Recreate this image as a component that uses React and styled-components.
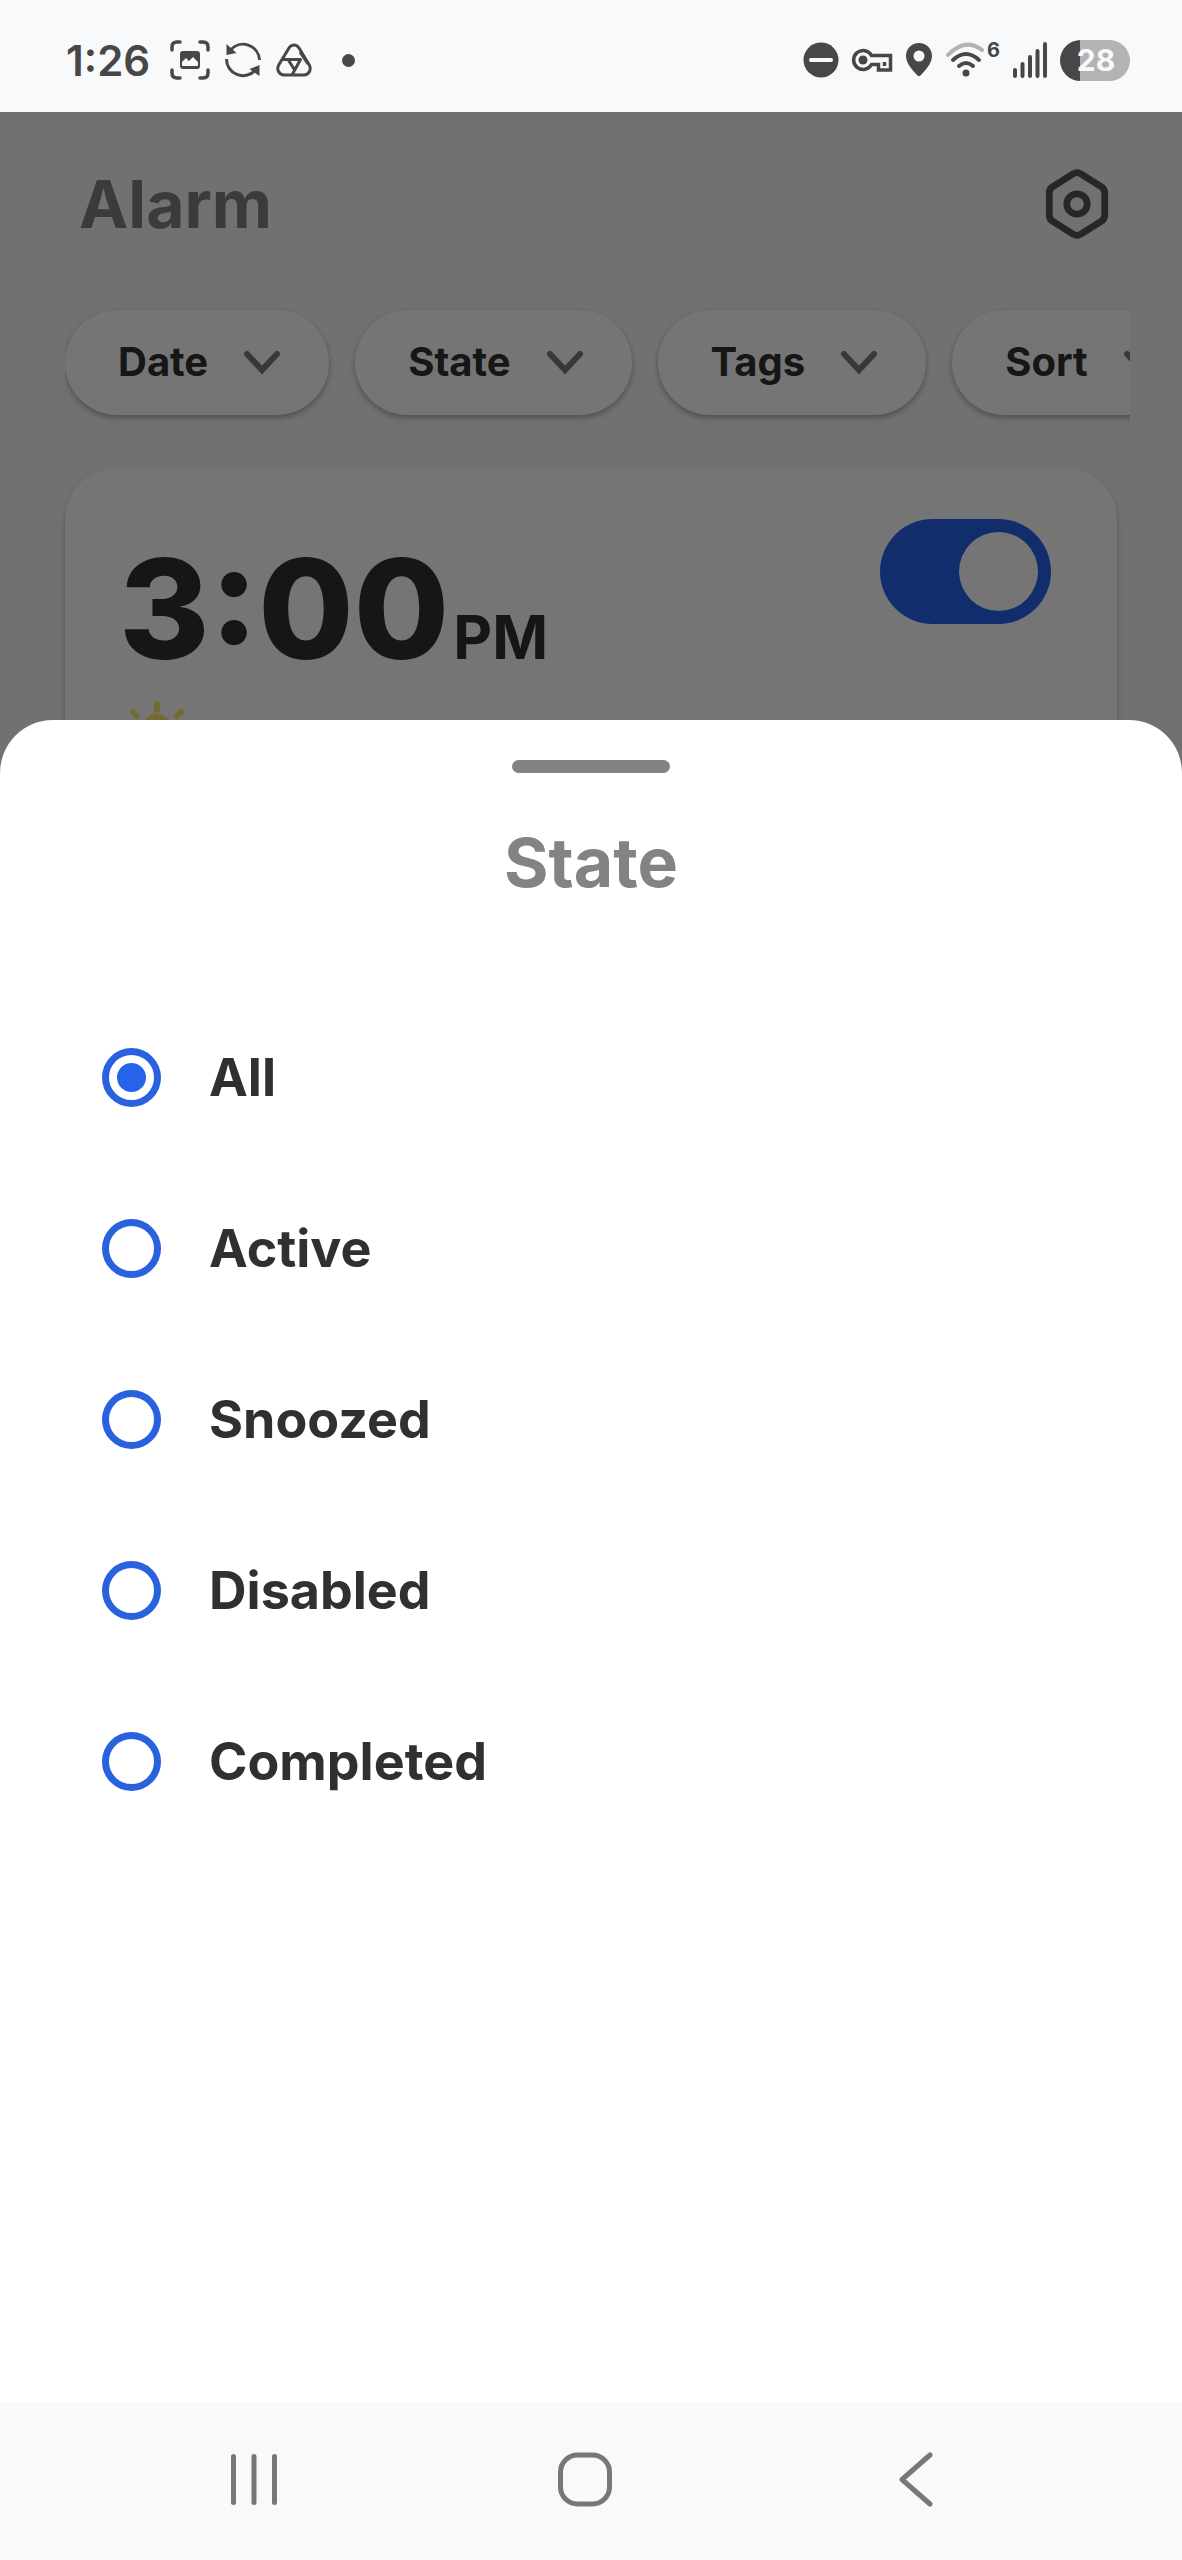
import React, { useState } from 'react';
import styled, { createGlobalStyle } from 'styled-components';

const filters = ['Date', 'State', 'Tags', 'Sort'];
const states = ['All', 'Active', 'Snoozed', 'Disabled', 'Completed'];

const StatusIcons = () => (
  <StatusGroup>
    <svg width="40" height="40" viewBox="0 0 40 40" fill="none" stroke="#474747" strokeWidth="3.500" strokeLinecap="round">
      <path d="M2 10V7q0-5 5-5h3M30 2h3q5 0 5 5v3M38 30v3q0 5-5 5h-3M10 38H7q-5 0-5-5v-3" />
      <rect x="10" y="11" width="20" height="18" rx="3" fill="#474747" stroke="none" />
      <path d="M12 25v-3l4-4 3 3 4-4 5 5v3q0 1-1 1H13q-1 0-1-1z" fill="#f8f9fb" stroke="none" />
    </svg>
    <svg width="38" height="38" viewBox="0 0 38 38" fill="none" stroke="#474747" strokeWidth="3">
      <path d="M7 8.500A16.500 16.500 0 0 1 35.500 19" />
      <path d="M31 29.500A16.500 16.500 0 0 1 2.500 18" />
      <path d="M2.500 3v11l10-2zM35.500 24v11l-10-7z" fill="#474747" stroke="none" />
    </svg>
    <svg width="36" height="34" viewBox="0 0 36 34" fill="none" stroke="#474747" strokeWidth="3" strokeLinejoin="round">
      <path d="M18 2q3 0 5 3l10 16.500c3 5 0 10-5 10.500H8c-5-.5-8-5.500-5-10.500L13 5q2-3 5-3z" />
      <path d="M7 16.500h17.500L16 32M12 16.500l7 11M24 9l8 12" />
    </svg>
    <Dot />
  </StatusGroup>
);

const SystemIcons = () => (
  <SystemGroup>
    <svg width="36" height="36" viewBox="0 0 36 36">
      <circle cx="18" cy="18" r="17.500" fill="#474747" />
      <path d="M8 18h20" stroke="#f8f9fb" strokeWidth="4" strokeLinecap="round" />
    </svg>
    <svg width="42" height="26" viewBox="0 0 42 26" fill="none" stroke="#474747" strokeWidth="3.500">
      <path d="M20.500 8.500H39.500V23H27.500V17.500H20.500A9.500 9.500 0 1 1 20.500 8.500z" />
      <path d="M33.500 15v4" />
      <circle cx="12" cy="13" r="4.500" fill="#474747" stroke="none" />
    </svg>
    <svg width="28" height="36" viewBox="0 0 28 36">
      <path
        d="M14 1C6.500 1 1 6.700 1 14c0 8 7.500 15 11.500 19.500q1.500 1.500 3 0C19.500 29 27 22 27 14 27 6.700 21.500 1 14 1zm0 18.500a5.500 5.500 0 1 1 0-11 5.500 5.500 0 0 1 0 11z"
        fill="#474747"
      />
    </svg>
    <WifiWrapper>
      <svg width="42" height="36" viewBox="0 0 42 36" fill="none" strokeWidth="4" strokeLinecap="round">
        <path d="M3 13Q20 -5 37 8" stroke="#b3b3b3" />
        <path d="M8 18Q21 6 34 18M14 24Q21 18 28 24" stroke="#474747" />
        <circle cx="21" cy="31" r="3.500" fill="#474747" />
      </svg>
      <sup>6</sup>
    </WifiWrapper>
    <svg width="36" height="38" viewBox="0 0 36 38" stroke="#474747" strokeWidth="4" strokeLinecap="round">
      <path d="M3 29v6M10.500 23v12M18 16v19M25.500 10v25M33 3v32" />
    </svg>
    <Battery>28</Battery>
  </SystemGroup>
);

const Chevron = () => (
  <svg width="38" height="26" viewBox="0 0 38 26" fill="none" stroke="#7b7b7b" strokeWidth="6">
    <path d="M4 5l15 16L34 5" strokeLinecap="round" />
  </svg>
);

const App = () => {
  const [selected, setSelected] = useState('All');
  const [enabled, setEnabled] = useState(true);

  return (
    <Phone>
      <GlobalStyle />
      <StatusBar>
        <Clock>1:26</Clock>
        <StatusIcons />
        <SystemIcons />
      </StatusBar>

      <Stage>
        <Page>
          <Header>
            <PageTitle>Alarm</PageTitle>
            <IconButton aria-label="Settings">
              <svg width="66" height="70" viewBox="0 0 66 72" fill="none" stroke="#555" strokeWidth="7">
                <path
                  d="M29 5q4-2.500 8 0L57 17.500q4.500 2.500 4.500 7v23q0 4.500-4.500 7L37 67q-4 2.500-8 0L9 54.500q-4.500-2.500-4.500-7v-23q0-4.500 4.500-7z"
                  strokeLinejoin="round"
                />
                <circle cx="33" cy="36" r="10.500" />
              </svg>
            </IconButton>
          </Header>

          <Filters>
            {filters.map((name) => (
              <Chip key={name}>
                {name}
                <Chevron />
              </Chip>
            ))}
          </Filters>

          <AlarmCard>
            <CardTop>
              <Time>
                3:00<Meridiem>PM</Meridiem>
              </Time>
              <Toggle
                type="checkbox"
                aria-label="Alarm enabled"
                checked={enabled}
                onChange={() => setEnabled(!enabled)}
              />
            </CardTop>
            <Sun width="76" height="64" viewBox="0 0 76 64" stroke="#fbe765" strokeWidth="6" strokeLinecap="round">
              <circle cx="38" cy="32" r="16" fill="#fbe765" stroke="none" />
              <path d="M38 6v6M38 52v6M10 32h6M60 32h6M14 14l4 4M58 18l4-4M14 50l4-4M58 46l4 4" />
            </Sun>
          </AlarmCard>
        </Page>

        <Scrim />

        <Sheet role="dialog" aria-labelledby="sheet-title">
          <Handle />
          <SheetTitle id="sheet-title">State</SheetTitle>
          <Options>
            {states.map((name) => (
              <Option key={name}>
                <Radio
                  type="radio"
                  name="state"
                  checked={selected === name}
                  onChange={() => setSelected(name)}
                />
                {name}
              </Option>
            ))}
          </Options>
        </Sheet>
      </Stage>

      <NavBar>
        <NavButton aria-label="Recents">
          <svg width="56" height="56" viewBox="0 0 56 56" stroke="#777" strokeWidth="5" strokeLinecap="round">
            <path d="M7.500 5.500v46M28 5.500v46M48.500 5.500v46" />
          </svg>
        </NavButton>
        <NavButton aria-label="Home">
          <svg width="56" height="56" viewBox="0 0 56 56" fill="none" stroke="#777" strokeWidth="5">
            <rect x="3.500" y="4" width="49" height="49" rx="17" />
          </svg>
        </NavButton>
        <NavButton aria-label="Back">
          <svg width="56" height="56" viewBox="0 0 56 56" fill="none" stroke="#777" strokeWidth="5">
            <path d="M42 4L14 28.500 42 53" strokeLinecap="round" strokeLinejoin="round" />
          </svg>
        </NavButton>
      </NavBar>
    </Phone>
  );
};

const GlobalStyle = createGlobalStyle`
  * {
    box-sizing: border-box;
  }

  body {
    margin: 0;
    background: #f8f9fb;
    font-family: Inter, Roboto, sans-serif;
  }

  button {
    border: none;
    font-family: inherit;
    cursor: pointer;
  }
`;

const Phone = styled.div`
  min-height: 100vh;
  display: flex;
  flex-direction: column;
`;

const StatusBar = styled.div`
  height: 112px;
  padding: 8px 52px 0 66px;
  display: flex;
  align-items: center;
  background: #f8f9fb;
`;

const Clock = styled.span`
  width: 84px;
  margin-right: 20px;
  font-size: 42px;
  font-weight: 600;
  color: #474747;
`;

const StatusGroup = styled.div`
  display: flex;
  align-items: center;
  gap: 14px;
`;

const Dot = styled.span`
  width: 13px;
  height: 13px;
  margin-left: 16px;
  border-radius: 50%;
  background: #474747;
`;

const SystemGroup = styled.div`
  margin-left: auto;
  display: flex;
  align-items: center;
  gap: 12px;
`;

const WifiWrapper = styled.div`
  display: flex;
  align-items: flex-start;

  sup {
    font-size: 20px;
    line-height: 16px;
    font-weight: 700;
    color: #474747;
  }
`;

const Battery = styled.span`
  width: 70px;
  height: 41px;
  padding-left: 2px;
  border-radius: 21px;
  background: linear-gradient(to right, #474747 28%, #b3b3b3 28%);
  font-size: 30px;
  line-height: 41px;
  font-weight: 700;
  text-align: center;
  color: #f8f9fb;
`;

const Stage = styled.main`
  flex: 1;
  display: grid;
  grid-template-columns: minmax(0, 1fr);

  > * {
    grid-area: 1 / 1;
  }
`;

const Page = styled.div`
  background: #f7f7f7;
  padding-left: 65px;
`;

const Header = styled.header`
  height: 182px;
  padding: 2px 72px 0 14px;
  display: flex;
  justify-content: space-between;
  align-items: center;
`;

const PageTitle = styled.h1`
  margin: 0;
  font-size: 66px;
  font-weight: 700;
  color: #808080;
`;

const IconButton = styled.button`
  padding: 0;
  background: none;
  display: flex;
`;

const Filters = styled.div`
  margin-right: 52px;
  padding: 16px 0 20px;
  display: flex;
  gap: 26px;
  overflow: hidden;
`;

const Chip = styled.button`
  height: 105px;
  padding: 0 48px 2px 53px;
  flex-shrink: 0;
  display: flex;
  align-items: center;
  gap: 35px;
  border-radius: 53px;
  background: #fff;
  box-shadow: 0 3px 6px rgba(0, 0, 0, 0.3);
  font-size: 40px;
  font-weight: 700;
  color: #303030;
`;

const AlarmCard = styled.section`
  margin: 32px 65px 0 0;
  padding: 52px 66px 52px 54px;
  border-radius: 53px;
  background: #fff;
  box-shadow: 0 3px 6px rgba(0, 0, 0, 0.2);
`;

const CardTop = styled.div`
  height: 179px;
  display: flex;
  justify-content: space-between;
  align-items: flex-start;
`;

const Time = styled.div`
  padding-top: 6px;
  font-size: 138px;
  line-height: 168px;
  font-weight: 800;
  color: #303030;
`;

const Meridiem = styled.span`
  margin-left: 4px;
  font-size: 60px;
  line-height: 1;
  font-weight: 700;
`;

const Toggle = styled.input`
  appearance: none;
  width: 171px;
  height: 105px;
  margin: 0;
  padding: 13px;
  display: flex;
  justify-content: ${({ checked }) => (checked ? 'flex-end' : 'flex-start')};
  border-radius: 53px;
  background: ${({ checked }) => (checked ? '#2563eb' : '#bbb')};

  &::before {
    content: '';
    width: 79px;
    height: 79px;
    border-radius: 50%;
    background: #fff;
  }
`;

const Sun = styled.svg`
  display: block;
`;

const Scrim = styled.div`
  background: rgba(0, 0, 0, 0.54);
`;

const Sheet = styled.section`
  margin-top: 608px;
  padding: 40px 32px 64px;
  border-radius: 53px 53px 0 0;
  background: #fff;
`;

const Handle = styled.div`
  width: 158px;
  height: 13px;
  margin: 0 auto;
  border-radius: 7px;
  background: #838383;
`;

const SheetTitle = styled.h2`
  margin: 49px 0 90px;
  font-size: 68px;
  line-height: 80px;
  font-weight: 700;
  text-align: center;
  color: #838383;
`;

const Options = styled.div`
  padding: 0 70px;
`;

const Option = styled.label`
  height: 171px;
  display: flex;
  align-items: center;
  gap: 48px;
  font-size: 52px;
  font-weight: 700;
  color: #303030;
`;

const Radio = styled.input`
  appearance: none;
  width: 59px;
  height: 59px;
  margin: 0;
  padding: 8px;
  border: 7px solid #2962de;
  border-radius: 50%;
  background: ${({ checked }) => (checked ? '#2563eb' : 'transparent')};
  background-clip: content-box;
`;

const NavBar = styled.nav`
  height: 158px;
  padding: 0 101px 4px 88px;
  display: grid;
  grid-template-columns: repeat(3, 1fr);
  background: #f8f9fb;
`;

const NavButton = styled.button`
  padding: 0;
  background: none;
  display: flex;
  justify-content: center;
  align-items: center;
`;

export default App;
